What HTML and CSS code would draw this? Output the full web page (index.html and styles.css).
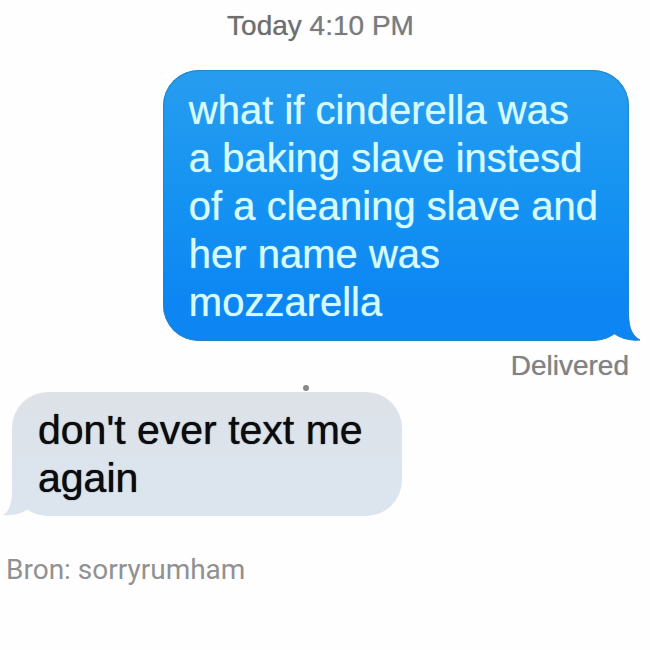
FILE: index.html
```html
<!DOCTYPE html>
<html lang="en">
<head>
  <meta charset="UTF-8">
  <meta name="viewport" content="width=device-width, initial-scale=1.0">
  <title>Messages</title>
  <link rel="stylesheet" href="styles.css">
</head>
<body>

  <main class="chat">
    <time class="timestamp"><span class="day">Today</span> 4:10 PM</time>

    <div class="message sent">
      <p>what if cinderella was<br>a baking slave instesd<br>of a cleaning slave and<br>her name was<br>mozzarella</p>
      <svg class="tail" viewBox="0 0 40 36" aria-hidden="true">
        <path d="M8 26 L14 1 H29 V10 C29 22 32 31 40 35 C30 36 21 34 14 29 C11 31 8 33 4 34 Z" fill="#0d86f3"/>
        <path d="M28.500 0 V10 C28.500 22 32 31 40 35 C33 36 27 34 23 33" fill="none" stroke="#2585c4" stroke-width="1"/>
      </svg>
    </div>
    <div class="status">Delivered</div>

    <div class="message received">
      <p>don't ever text me<br>again</p>
      <span class="dot"></span>
      <svg class="tail" viewBox="0 0 40 36" aria-hidden="true">
        <path d="M32 26 L26 1 H11 V10 C11 22 9 31 2 35 C12 36 20 34 27 29 C30 31 33 33 36 34 Z" fill="#dce4ee"/>
      </svg>
    </div>

    <footer class="source">Bron: sorryrumham</footer>
  </main>

</body>
</html>
```

FILE: styles.css
```css
body {
  margin: 0;
  background: #fefefe;
  font-family: "Liberation Sans", Arial, sans-serif;
}

.chat {
  display: flex;
  flex-direction: column;
  padding: 8px 21px 24px 12px;
}

.timestamp {
  align-self: center;
  font-size: 28px;
  line-height: 36px;
  color: #7b7b7d;
  text-shadow: 0 0 1px #a5a5a7;
}

.day {
  color: #6e6e70;
}

/* Bubbles */
.message {
  position: relative;
  border-radius: 36px;
  font-size: 40px;
  line-height: 48px;
}

.message p {
  margin: 0;
}

.sent {
  align-self: flex-end;
  margin-top: 26px;
  padding: 16px 31px 15px 26px;
  background: linear-gradient(#279df0, #1492f2 50%, #0d86f3 85%);
  box-shadow: inset 0 0 1px 1px #2585c4;
  color: #d5fbff;
  text-shadow: 0 0 1px #a8e6fb;
}

.received {
  align-self: flex-start;
  margin-top: 8px;
  padding: 14px 39px 14px 26px;
  background: linear-gradient(#dde2e7, #dce4ee 70%);
  color: #0c0c0e;
  text-shadow: 0 0 1px #0c0c0e;
}

.received p {
  font-size: 41px;
}

/* Little pointer in the bottom corner of each bubble */
.tail {
  position: absolute;
  bottom: 0;
  width: 40px;
  height: 36px;
}

.sent .tail {
  right: -11px;
}

.received .tail {
  left: -11px;
}

.dot {
  position: absolute;
  top: -7px;
  left: 291px;
  width: 6px;
  height: 6px;
  border-radius: 50%;
  background: #8b8789;
}

.status {
  align-self: flex-end;
  margin-top: 7px;
  font-size: 28px;
  line-height: 36px;
  color: #828284;
  text-shadow: 0 0 1px #a5a5a7;
}

.source {
  margin: 36px 0 0 -6px;
  font-family: Roboto, sans-serif;
  font-size: 28px;
  line-height: 36px;
  color: #919191;
}
```
